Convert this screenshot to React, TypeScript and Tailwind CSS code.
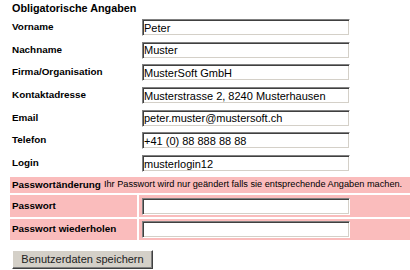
import React from 'react';

const fields = [
  { label: 'Vorname', value: 'Peter', h: 'h-[23px]' },
  { label: 'Nachname', value: 'Muster', h: 'h-[22px]' },
  { label: 'Firma/Organisation', value: 'MusterSoft GmbH', h: 'h-[23px]' },
  { label: 'Kontaktadresse', value: 'Musterstrasse 2, 8240 Musterhausen', h: 'h-[23px]' },
  { label: 'Email', value: 'peter.muster@mustersoft.ch', h: 'h-[22px]' },
  { label: 'Telefon', value: '+41 (0) 88 888 88 88', h: 'h-[23px]' },
  { label: 'Login', value: 'musterlogin12', h: 'h-[23px]' },
];

const inputClass =
  'block w-[208px] h-[17px] pl-[1px] bg-white text-[11px] leading-[13px] text-black outline-none border border-t-[#808080] border-l-[#808080] border-b-white border-r-white shadow-[inset_1px_1px_0_#404040,inset_-1px_-1px_0_#d4d0c8]';

function Field({ value, type = 'text' }: { value: string; type?: string }) {
  return <input type={type} defaultValue={value} className={inputClass} />;
}

export default function App() {
  return (
    <div
      className="w-[410px] h-[270px] bg-white pl-[10px] text-black"
      style={{ fontFamily: '"Liberation Sans", Arial, sans-serif' }}
    >
      <div className="h-[16px] pt-[1px] pl-[2px] text-[10.8px] leading-[15px] font-bold">
        Obligatorische Angaben
      </div>

      {fields.map((f) => (
        <div key={f.label} className={`flex items-center gap-[2px] ${f.h}`}>
          <div className="w-[127px] pl-[2px] text-[9.9px] font-bold">{f.label}</div>
          <div className="pl-[3px]">
            <Field value={f.value} />
          </div>
        </div>
      ))}

      <div className="mt-[2px] flex flex-col gap-[2px]">
        <div className="h-[16px] bg-[#fabcbc] pl-[2px] flex items-center whitespace-nowrap">
          <span className="text-[9.9px] font-bold">Passwortänderung</span>
          <span className="text-[9.2px] ml-[3px]">
            Ihr Passwort wird nur geändert falls sie entsprechende Angaben machen.
          </span>
        </div>
        <div className="flex gap-[2px] h-[22px]">
          <div className="w-[127px] bg-[#fabcbc] pl-[2px] flex items-center text-[9.9px] font-bold">
            Passwort
          </div>
          <div className="flex-1 bg-[#fabcbc] pl-[3px] pt-[3px]">
            <Field value="" type="password" />
          </div>
        </div>
        <div className="flex gap-[2px] h-[21px]">
          <div className="w-[127px] bg-[#fabcbc] pl-[2px] flex items-center text-[9.9px] font-bold">
            Passwort wiederholen
          </div>
          <div className="flex-1 bg-[#fabcbc] pl-[3px] pt-[2px]">
            <Field value="" type="password" />
          </div>
        </div>
      </div>

      <div className="pt-[6px] pl-[2px]">
        <button
          type="button"
          className="w-[141px] h-[19px] bg-[#d4d0c8] text-[11px] leading-[15px] text-[#222] border border-t-white border-l-white border-b-[#404040] border-r-[#404040] shadow-[inset_-1px_-1px_0_#808080]"
        >
          Benutzerdaten speichern
        </button>
      </div>
    </div>
  );
}
